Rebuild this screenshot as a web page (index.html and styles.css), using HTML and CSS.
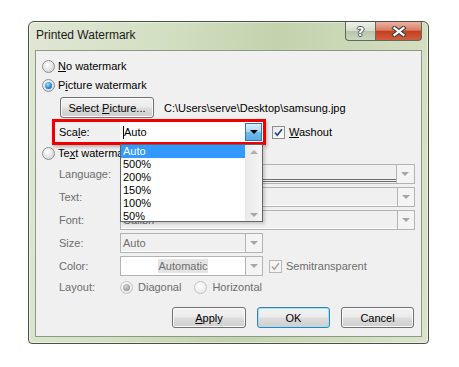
FILE: index.html
```html
<!DOCTYPE html>
<html lang="en">
<head>
  <meta charset="UTF-8">
  <title>Printed Watermark</title>
  <link rel="stylesheet" href="styles.css">
</head>
<body>
  <div class="dialog">
    <div class="titlebar">
      <span class="title">Printed Watermark</span>
      <div class="caption-buttons">
        <div class="cap-btn help"><span>?</span></div>
        <div class="cap-btn close">
          <svg width="16" height="11" viewBox="0 0 16 11">
            <path d="M3.5 2 L12.5 9 M12.5 2 L3.5 9" stroke="#3f4a44" stroke-width="4.4" stroke-linecap="square" fill="none"/>
            <path d="M3.5 2 L12.5 9 M12.5 2 L3.5 9" stroke="#ffffff" stroke-width="2.2" stroke-linecap="square" fill="none"/>
          </svg>
        </div>
      </div>
    </div>

    <div class="client">
      <div class="opt">
        <span class="radio"></span>
        <span><u>N</u>o watermark</span>
      </div>
      <div class="opt">
        <span class="radio checked"></span>
        <span>P<u>i</u>cture watermark</span>
      </div>
      <div class="pic-row">
        <button class="btn select">Select <u>P</u>icture...</button>
        <span class="path">C:\Users\serve\Desktop\samsung.jpg</span>
      </div>

      <div class="scale-row">
        <div class="redbox">
          <span class="label">Sca<u>l</u>e:</span>
          <div class="combo active">
            <span class="field"><span class="caret"></span>Auto</span>
            <span class="arrow blue"><span class="tri"></span></span>
          </div>
        </div>
        <label class="check">
          <span class="checkbox checked">
            <svg width="11" height="11" viewBox="0 0 11 11"><path d="M2 5.5 L4.3 8.2 L9 2.2" stroke="#23419a" stroke-width="1.7" fill="none"/></svg>
          </span>
          <span><u>W</u>ashout</span>
        </label>

        <div class="droplist">
          <div class="items">
            <div class="item selected">Auto</div>
            <div class="item">500%</div>
            <div class="item">200%</div>
            <div class="item">150%</div>
            <div class="item">100%</div>
            <div class="item">50%</div>
          </div>
          <div class="scrollbar">
            <span class="tri up"></span>
            <span class="tri"></span>
          </div>
        </div>
      </div>

      <div class="opt tw">
        <span class="radio"></span>
        <span>Te<u>x</u>t watermark</span>
      </div>

      <div class="field-row first">
        <span class="label dim">Language:</span>
        <div class="combo wide">
          <span class="field lined"></span>
          <span class="arrow"><span class="tri"></span></span>
        </div>
      </div>
      <div class="field-row">
        <span class="label dim">Text:</span>
        <div class="combo wide">
          <span class="field"></span>
          <span class="arrow"><span class="tri"></span></span>
        </div>
      </div>
      <div class="field-row">
        <span class="label dim">Font:</span>
        <div class="combo wide">
          <span class="field">Calibri</span>
          <span class="arrow"><span class="tri"></span></span>
        </div>
      </div>
      <div class="field-row">
        <span class="label dim">Size:</span>
        <div class="combo">
          <span class="field">Auto</span>
          <span class="arrow"><span class="tri"></span></span>
        </div>
      </div>
      <div class="field-row">
        <span class="label dim">Color:</span>
        <div class="combo white">
          <span class="field center"><span class="swatch">Automatic</span></span>
          <span class="arrow"><span class="tri"></span></span>
        </div>
        <label class="check dim">
          <span class="checkbox checked disabled">
            <svg width="11" height="11" viewBox="0 0 11 11"><path d="M2 5.5 L4.3 8.2 L9 2.2" stroke="#a8a8a8" stroke-width="1.5" fill="none"/></svg>
          </span>
          <span>Semitransparent</span>
        </label>
      </div>
      <div class="layout-row">
        <span class="label dim">Layout:</span>
        <span class="radio checked disabled"></span>
        <span class="dim radio-text">Diagonal</span>
        <span class="radio disabled second"></span>
        <span class="dim radio-text">Horizontal</span>
      </div>

      <div class="buttons">
        <button class="btn apply"><u>A</u>pply</button>
        <button class="btn default">OK</button>
        <button class="btn">Cancel</button>
      </div>
    </div>
  </div>
</body>
</html>
```

FILE: styles.css
```css
* {
  box-sizing: border-box;
}
body {
  margin: 0;
  width: 459px;
  height: 367px;
  overflow: hidden;
  background: #fff;
  font-family: "Liberation Sans", Arial, sans-serif;
  font-size: 11px;
  color: #000;
}
u {
  text-decoration: underline;
  text-underline-offset: 1px;
}

/* window frame */
.dialog {
  margin: 21px 0 0 28px;
  width: 401px;
  height: 323px;
  border: 1px solid #4b5149;
  border-radius: 6px 6px 4px 4px;
  padding: 0 6px 6px;
  display: flex;
  flex-direction: column;
  background: linear-gradient(100deg, #e0e7d4 0%, #d3dfc2 30%, #c3d3ad 55%, #cddab9 75%, #dae3cb 100%);
  box-shadow: inset 0 0 0 1px rgba(255, 255, 255, 0.45);
}
.titlebar {
  height: 28px;
  display: flex;
  justify-content: space-between;
  align-items: flex-start;
}
.title {
  font-size: 12px;
  line-height: 15px;
  padding: 6px 0 0 1px;
  color: #1b1b1b;
}
.caption-buttons {
  display: flex;
}
.cap-btn {
  height: 19px;
  border: 1px solid #5e6b58;
  border-top: none;
  display: flex;
  align-items: center;
  justify-content: center;
}
.help {
  width: 30px;
  border-right: none;
  border-radius: 0 0 0 4px;
  background: linear-gradient(#eef1ea 0%, #d5ddcb 48%, #b9c6ab 52%, #cbd6bf 100%);
}
.help span {
  font-family: "DejaVu Sans", sans-serif;
  font-weight: bold;
  font-size: 13px;
  color: #fff;
  text-shadow: 1px 0 #4b5560, -1px 0 #4b5560, 0 1px #4b5560, 0 -1px #4b5560;
}
.close {
  width: 47px;
  border-radius: 0 0 4px 0;
  background: linear-gradient(#eab1a2 0%, #dc7d66 45%, #c4401f 52%, #d15d3f 100%);
}

/* client area */
.client {
  height: 287px;
  background: #f0f0f0;
  border: 1px solid #8d9986;
  display: flex;
  flex-direction: column;
  padding-top: 8px;
}
.opt {
  height: 14px;
  display: flex;
  align-items: center;
  gap: 3px;
  margin-left: 6px;
}
.opt + .opt {
  margin-top: 5px;
}
.opt.tw {
  margin-top: 1px;
}
.radio {
  width: 13px;
  height: 13px;
  border-radius: 50%;
  border: 1px solid #8c8e90;
  background: radial-gradient(circle at 40% 35%, #ffffff 0%, #e8e8e8 45%, #c9cbcd 100%);
  display: flex;
  align-items: center;
  justify-content: center;
  flex-shrink: 0;
}
.radio.checked::after {
  content: "";
  width: 7px;
  height: 7px;
  border-radius: 50%;
  background: radial-gradient(circle at 40% 35%, #a8dcfb 0%, #2b8ad8 55%, #0c4f91 100%);
}
.radio.disabled {
  border-color: #c4c4c4;
  background: radial-gradient(circle at 40% 35%, #ffffff 0%, #eeeeee 60%, #dddddd 100%);
}
.radio.checked.disabled::after {
  background: radial-gradient(circle at 40% 35%, #d6d6d6 0%, #a2a2a2 60%, #8a8a8a 100%);
}

.pic-row {
  margin-top: 5px;
  height: 21px;
  display: flex;
  align-items: center;
  margin-left: 24px;
}
.path {
  margin-left: 10px;
}

.btn {
  height: 21px;
  padding: 0;
  font: inherit;
  color: #000;
  border: 1px solid #707070;
  border-radius: 3px;
  background: linear-gradient(#f3f3f3 0%, #ebebeb 48%, #dddddd 52%, #cfcfcf 100%);
  box-shadow: inset 0 0 0 1px #fbfbfb;
}
.btn.select {
  width: 94px;
}
.btn.default {
  border-color: #3c7fb1;
  box-shadow: inset 0 0 0 1px #9fe0fb;
}

/* scale row with the red marker */
.scale-row {
  margin-top: 1px;
  margin-left: 16px;
  height: 26px;
  display: flex;
  align-items: center;
  position: relative;
}
.redbox {
  width: 214px;
  height: 26px;
  border: 3px solid #f20000;
  display: flex;
  align-items: center;
  padding-left: 4px;
  box-shadow: 1px 2px 3px rgba(0, 0, 0, 0.25);
}
.label {
  width: 61px;
  flex-shrink: 0;
}
.dim {
  color: #6d6d6d;
}
.check {
  display: flex;
  align-items: center;
  gap: 4px;
  margin-left: 6px;
}
.checkbox {
  width: 13px;
  height: 13px;
  border: 1px solid #8c8e90;
  background: linear-gradient(135deg, #dfe3e8 0%, #f7f8f9 60%, #ffffff 100%);
  display: flex;
  align-items: center;
  justify-content: center;
}
.checkbox.disabled {
  border-color: #b8b8b8;
  background: #f4f4f4;
}

/* combo boxes */
.combo {
  width: 143px;
  height: 20px;
  border: 1px solid #b3b3b3;
  background: #f0f0f0;
  display: flex;
}
.combo.wide {
  width: 295px;
}
.combo.white {
  background: #fff;
}
.combo.active {
  border-color: #fff;
  background: #fff;
}
.field {
  flex: 1;
  padding-left: 2px;
  line-height: 18px;
  color: #6d6d6d;
  white-space: nowrap;
  overflow: hidden;
  border-bottom: 1px solid #fff;
}
.combo.active .field {
  color: #000;
  display: flex;
  align-items: center;
  border-bottom: none;
}
.caret {
  width: 1px;
  height: 13px;
  background: #000;
}
.field.lined {
  flex: none;
  width: 275px;
  height: 17px;
  line-height: 14px;
  border-bottom: 3px double #6f6f6f;
}
.field.center {
  display: flex;
  justify-content: center;
  align-items: center;
  padding-left: 0;
}
.swatch {
  background: #e4e4e4;
  padding: 0 1px;
  line-height: 14px;
}
.arrow {
  width: 17px;
  flex-shrink: 0;
  border-left: 1px solid #b3b3b3;
  background: #f4f4f4;
  display: flex;
  align-items: center;
  justify-content: center;
}
.arrow.blue {
  border: 1px solid #3a78a8;
  background: linear-gradient(#d9effc 0%, #a9d9f6 48%, #6fbcec 52%, #5aaee2 100%);
}
.tri {
  width: 0;
  height: 0;
  border-left: 4px solid transparent;
  border-right: 4px solid transparent;
  border-top: 4px solid #a6a6a6;
}
.arrow.blue .tri {
  border-top-color: #000;
}
.tri.up {
  border-top: none;
  border-bottom: 4px solid #b0b0b0;
}

/* open list of the scale combo */
.droplist {
  position: absolute;
  left: 68px;
  top: 25px;
  width: 143px;
  height: 78px;
  border: 1px solid #646464;
  background: #fff;
  display: flex;
  overflow: hidden;
  box-shadow: 2px 2px 3px rgba(0, 0, 0, 0.18);
  z-index: 2;
}
.items {
  flex: 1;
}
.item {
  height: 13px;
  line-height: 13px;
  padding-left: 2px;
}
.item.selected {
  background: #3399ff;
  color: #fff;
}
.scrollbar {
  width: 17px;
  background: linear-gradient(to right, #e9e9e9, #f5f5f5);
  display: flex;
  flex-direction: column;
  justify-content: space-between;
  align-items: center;
  padding: 5px 0 4px;
}

.field-row {
  height: 20px;
  margin-top: 3px;
  display: flex;
  align-items: center;
  padding-left: 23px;
}
.field-row.first {
  margin-top: 4px;
}
.layout-row {
  height: 14px;
  margin-top: 4px;
  display: flex;
  align-items: center;
  padding-left: 23px;
}
.radio-text {
  margin-left: 5px;
}
.radio.second {
  margin-left: 13px;
}

.buttons {
  margin-top: 13px;
  display: flex;
  justify-content: flex-end;
  gap: 11px;
  padding-right: 7px;
}
.buttons .btn {
  width: 73px;
}
.buttons .btn.apply {
  width: 74px;
}
```
